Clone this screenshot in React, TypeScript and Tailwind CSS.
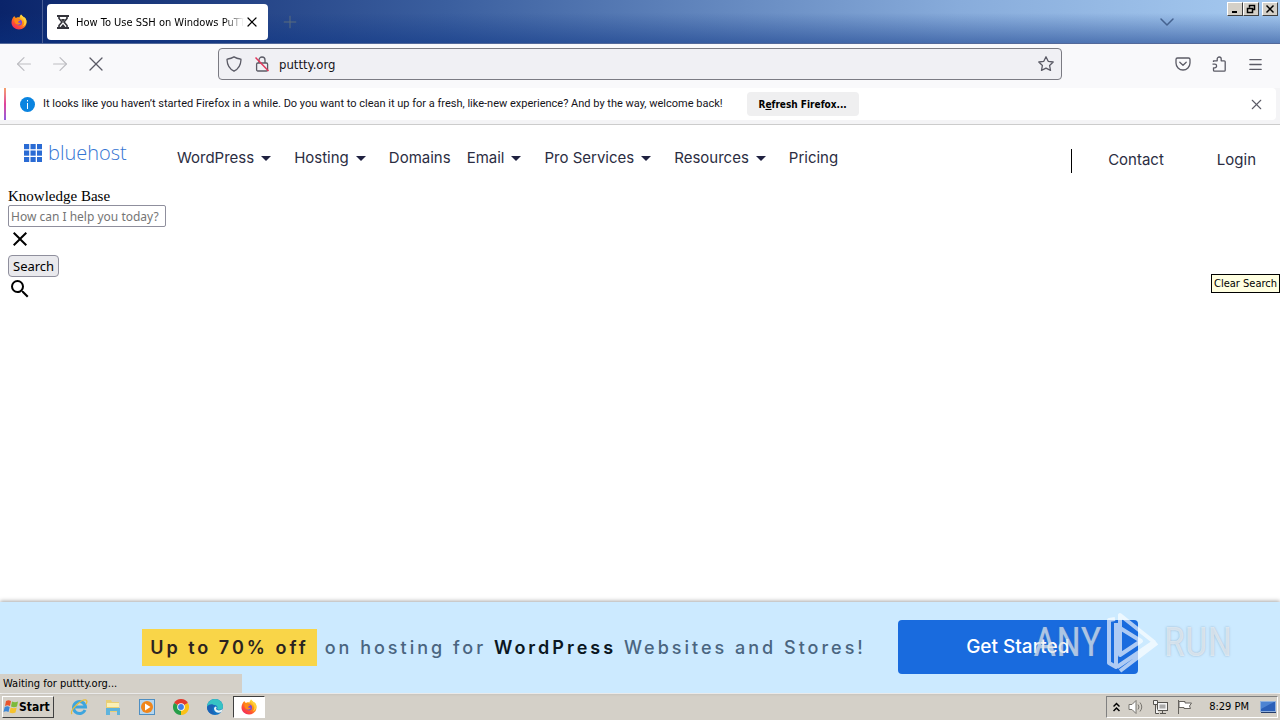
import React from 'react';
import { ArrowLeft, ArrowRight, X, Plus, ChevronDown, Menu } from 'lucide-react';
import { MdClose, MdSearch } from 'react-icons/md';

interface NavItem {
  label: string;
  hasMenu: boolean;
}

const NAV_ITEMS: NavItem[] = [
  { label: 'WordPress', hasMenu: true },
  { label: 'Hosting', hasMenu: true },
  { label: 'Domains', hasMenu: false },
  { label: 'Email', hasMenu: true },
  { label: 'Pro Services', hasMenu: true },
  { label: 'Resources', hasMenu: true },
  { label: 'Pricing', hasMenu: false },
];

const FirefoxLogo = ({ size = 16 }: { size?: number }) => (
  <svg width={size} height={size} viewBox="0 0 32 32" aria-hidden="true">
    <defs>
      <linearGradient id="ffBody" x1="0.85" y1="0.1" x2="0.2" y2="0.95">
        <stop offset="0" stopColor="#fff44f" />
        <stop offset="0.35" stopColor="#ff980e" />
        <stop offset="0.75" stopColor="#ff4a37" />
        <stop offset="1" stopColor="#ee2b62" />
      </linearGradient>
    </defs>
    <path d="M20 1c-2 2-3 4-3 6-3-1-6 0-7 1C8 7 7 5 7 4 3 7 1 12 1 17c0 8 7 14 15 14s15-6 15-14c0-5-2-9-5-11 0 1 1 2 1 3-2-4-5-5-7-8z" fill="url(#ffBody)" />
    <path d="M20 1c-1 4 2 6 4 9 4 5 3 12-1 15 6-2 8-7 8-10 0-4-2-7-5-9l1 3c-2-4-5-5-7-8z" fill="#ffcf3c" />
    <circle cx="16" cy="17" r="6" fill="#7542e5" />
    <path d="M7 9c3-1 6 0 8 2l4 1c-1 2-4 2-5 4 1 2 4 2 6 1-1 4-6 6-10 3-3-3-4-7-3-11z" fill="#ff8a16" />
  </svg>
);

const HourglassIcon = () => (
  <svg width="14" height="16" viewBox="0 0 14 16" fill="none" stroke="#33333a" strokeWidth="2" className="shrink-0" aria-hidden="true">
    <path d="M1 2h12M1 14h12" />
    <path d="M3 2v2.500L6 8l-3 3.500V14M11 2v2.500L8 8l3 3.500V14" strokeWidth="1.600" />
    <path d="M5 5h4L7 8zM7 10l2.500 3h-5z" fill="#33333a" stroke="none" />
  </svg>
);

const ShieldIcon = () => (
  <svg width="16" height="16" viewBox="0 0 16 16" fill="none" stroke="#5b5b66" strokeWidth="1.3" aria-hidden="true">
    <path d="M8 .9c2 1.3 4 1.9 6.3 2.1.5 0 .7.4.7.8C14.800 8.500 13 12.800 8 15.200 3 12.800 1.200 8.500 1 3.800c0-.4.2-.8.7-.8C4 2.800 6 2.200 8 .9z" />
  </svg>
);

const InsecureLockIcon = () => (
  <svg width="16" height="16" viewBox="0 0 16 16" fill="none" stroke="#5b5b66" strokeWidth="1.3" aria-hidden="true">
    <path d="M5 7V4a3 3 0 0 1 6 0v3" />
    <rect x="2.600" y="7" width="11" height="8" rx="1.200" />
    <path d="M1.500 1.500l13 13.500" stroke="#e2375c" strokeWidth="1.500" />
  </svg>
);

const StarIcon = () => (
  <svg width="16" height="16" viewBox="0 0 16 16" fill="none" stroke="#5b5b66" strokeWidth="1.3" strokeLinejoin="round" aria-hidden="true">
    <path d="M8 .8l2.200 4.500 5 .7-3.600 3.500.9 4.900L8 12.100l-4.500 2.300.9-4.900L.8 6l5-.7z" />
  </svg>
);

const PocketIcon = () => (
  <svg width="16" height="16" viewBox="0 0 16 16" fill="none" stroke="#5b5b66" strokeWidth="1.3" strokeLinecap="round" strokeLinejoin="round" aria-hidden="true">
    <path d="M2.500 2h11A1.500 1.500 0 0 1 15 3.500V7A7 7 0 0 1 1 7V3.500A1.500 1.500 0 0 1 2.500 2z" />
    <path d="M4.800 6.200L8 9.200l3.200-3" />
  </svg>
);

const PuzzleIcon = () => (
  <svg width="16" height="16" viewBox="0 0 16 16" fill="none" stroke="#5b5b66" strokeWidth="1.3" strokeLinejoin="round" aria-hidden="true">
    <path d="M2.500 6V4.800h3.700V3a2 2 0 0 1 4 0v1.800h3a1 1 0 0 1 1 1v8.400a1 1 0 0 1-1 1H3.500a1 1 0 0 1-1-1v-2.400h1.300a1.700 1.700 0 0 0 0-3.600H1.500" />
  </svg>
);

const WindowButton = ({ label, children }: { label: string; children: React.ReactNode }) => (
  <button
    aria-label={label}
    className="flex h-[14px] w-4 items-center justify-center border border-t-white border-l-white border-r-[#404040] border-b-[#404040] bg-[#d4d0c8]"
  >
    <svg width="10" height="10" viewBox="0 0 10 10" fill="none" stroke="#000" strokeWidth="1.5" aria-hidden="true">
      {children}
    </svg>
  </button>
);

const TitleBar = () => (
  <header className="flex h-11 items-stretch bg-[linear-gradient(to_bottom,transparent_30%,rgba(10,50,130,0.5)),linear-gradient(to_right,#0a246a,#3b5f9f_35%,#88acdb_75%,#a6caf0)] border-b border-[#53699a]">
    <div className="flex w-[43px] items-center justify-center border-r border-[#4a5f96] pr-1">
      <FirefoxLogo />
    </div>
    <div className="mt-1 mb-[3px] ml-1 flex w-[221px] items-center rounded-[4px] bg-white pl-[9px] pr-2">
      <HourglassIcon />
      <span className="ml-[6px] min-w-0 flex-1 overflow-hidden whitespace-nowrap pt-[3px] text-[11px] [mask-image:linear-gradient(to_right,black_88%,transparent)]">
        How To Use SSH on Windows PuTTY
      </span>
      <button aria-label="Close tab">
        <X size={16} strokeWidth={1.8} />
      </button>
    </div>
    <button aria-label="New tab" className="ml-3 text-[#5a6c7c]">
      <Plus size={20} strokeWidth={1.2} />
    </button>
    <button aria-label="List all tabs" className="ml-auto mr-12 text-[#45628f]">
      <ChevronDown size={24} strokeWidth={1.5} />
    </button>
    <div className="mr-[2px] mt-[2px] flex items-start">
      <WindowButton label="Minimize">
        <path d="M2 8h5" strokeWidth="2" />
      </WindowButton>
      <WindowButton label="Restore">
        <path d="M3.500 3.500V1.500h5v4h-2M1.500 4.500h5v4h-5zM1 4.500h6M3 1.500h6" />
      </WindowButton>
      <div className="ml-[3px] flex">
        <WindowButton label="Close">
          <path d="M1.500 1.500l7 7M8.500 1.500l-7 7" />
        </WindowButton>
      </div>
    </div>
  </header>
);

const Toolbar = () => (
  <div className="flex h-11 items-center bg-[#f9f9fb] pb-1 text-[#5b5b66]">
    <div className="flex w-[218px] items-center pl-[6px]">
      <button aria-label="Back" className="flex w-9 justify-center text-[#bdbdc2]"><ArrowLeft size={22} strokeWidth={1.3} /></button>
      <button aria-label="Forward" className="flex w-9 justify-center text-[#bdbdc2]"><ArrowRight size={22} strokeWidth={1.3} /></button>
      <button aria-label="Stop" className="flex w-9 justify-center"><X size={24} strokeWidth={1.3} /></button>
    </div>
    <div className="flex h-8 flex-1 items-center rounded-[4px] border border-[#7b7b83] bg-[#f0f0f4] px-[7px]">
      <ShieldIcon />
      <span className="ml-3 flex"><InsecureLockIcon /></span>
      <input
        aria-label="Address"
        defaultValue="puttty.org"
        className="ml-[9px] min-w-0 flex-1 bg-transparent pt-px text-[13px] text-[#15141a] outline-none"
      />
      <button aria-label="Bookmark this page"><StarIcon /></button>
    </div>
    <div className="flex w-[218px] items-center justify-end gap-5 pr-4">
      <button aria-label="Save to Pocket"><PocketIcon /></button>
      <button aria-label="Extensions"><PuzzleIcon /></button>
      <button aria-label="Open menu"><Menu size={17} strokeWidth={1.8} /></button>
    </div>
  </div>
);

const Notification = () => (
  <div className="border-b border-[#cccccc] bg-[#f4f4f6] pb-1 pr-1">
    <div className="flex h-8 items-center rounded-r-[4px] bg-white pr-[11px]">
      <div className="ml-1 h-full w-[2px] bg-gradient-to-b from-[#f5a06a] via-[#e0409a] to-[#9059e0]" />
      <span className="ml-[14px] flex size-[15px] items-center justify-center rounded-full bg-[#0a84e0]">
        <svg width="7" height="9" viewBox="0 0 7 9" fill="#fff" aria-hidden="true">
          <path d="M3 0h1v1.500H3zM3 3h1v6H3z" />
        </svg>
      </span>
      <p className="ml-2 whitespace-nowrap font-[Roboto,sans-serif] text-[11px] text-[#15141a]">
        It looks like you haven’t started Firefox in a while. Do you want to clean it up for a fresh, like-new experience? And by the way, welcome back!
      </p>
      <button className="ml-6 h-6 w-28 rounded-[4px] bg-[#efeff0] text-[10px] font-bold whitespace-nowrap">
        R<u>e</u>fresh Firefox...
      </button>
      <button aria-label="Dismiss" className="ml-auto text-[#5b5b66]">
        <X size={17} strokeWidth={1.5} />
      </button>
    </div>
  </div>
);

const SiteHeader = () => (
  <header className="flex h-[63px] items-center pl-6 pr-6 font-[Inter,sans-serif] text-[15px] text-[#2b2d42]">
    <a href="#home" className="mb-2 flex w-[153px] items-center gap-[6px] text-[#3575d3]">
      <svg width="18" height="18" viewBox="0 0 18 18" fill="#2a6bd4" aria-hidden="true">
        {[0, 1, 2].map((row) =>
          [0, 1, 2].map((col) => <rect key={`${row}${col}`} x={col * 6.500} y={row * 6.500} width="5.200" height="5.200" />)
        )}
      </svg>
      <span className="font-['Open_Sans',sans-serif] text-[20px] font-light leading-6">bluehost</span>
    </a>
    <nav className="mt-1 flex items-center gap-4">
      {NAV_ITEMS.map((item) => (
        <a key={item.label} href={`#${item.label}`} className="flex items-center whitespace-nowrap">
          {item.label}
          {item.hasMenu && (
            <span className="flex w-6 justify-center">
              <svg width="10" height="5" viewBox="0 0 10 5" fill="#1f2140" aria-hidden="true"><path d="M0 0h10L5 5z" /></svg>
            </span>
          )}
        </a>
      ))}
    </nav>
    <div className="ml-auto mt-2 flex h-6 items-center border-l border-black pl-9">
      <a href="#contact">Contact</a>
      <a href="#login" className="ml-[53px]">Login</a>
    </div>
  </header>
);

const Banner = () => (
  <section className="flex h-[91px] items-center justify-center gap-8 bg-[#cceaff] pb-px font-[Inter,sans-serif] shadow-[0_-1px_4px_rgba(0,0,0,0.35)]">
    <p className="flex items-center gap-2 whitespace-nowrap text-[18px] font-medium tracking-[3px] text-[#4a6580]">
      <strong className="bg-[#f9d548] px-2 py-[6px] leading-[25px] font-semibold text-[#2b2320]">Up to 70% off</strong>
      <span>
        on hosting for <strong className="font-semibold text-[#0b1722]">WordPress</strong> Websites and Stores!
      </span>
    </p>
    <button className="h-[54px] w-60 rounded-[4px] bg-[#196bde] text-[19px] font-medium text-white">Get Started</button>
  </section>
);

const Watermark = () => (
  <div className="pointer-events-none absolute bottom-[18px] right-12 flex items-center gap-1 font-['Roboto_Condensed','Liberation_Sans_Narrow',Roboto,sans-serif] text-[40px] font-normal leading-none text-white/60 [text-shadow:0_0_2px_rgba(90,120,150,0.5)]">
    <span>ANY</span>
    <svg width="54" height="64" viewBox="5 0 54 64" fill="none" stroke="#fff" strokeOpacity="0.65" strokeWidth="4" strokeLinejoin="round" aria-hidden="true">
      <path d="M14 8L8 9v43l7 4V12M16 56l37-25L19 4v40l21-14-21-13M19 60l37-28" />
    </svg>
    <span>RUN</span>
  </div>
);

const KnowledgeBase = () => (
  <main className="flex flex-1 flex-col items-start px-2 font-['Liberation_Serif',serif] text-[15px] leading-[17px]">
    <label htmlFor="kb-search">Knowledge Base</label>
    <input
      id="kb-search"
      type="text"
      placeholder="How can I help you today?"
      className="h-[22px] w-[158px] rounded-[2px] border border-[#8f8f9d] px-[2px] font-['Noto_Sans',sans-serif] text-[12px] placeholder:text-[#757575]"
    />
    <button aria-label="Clear search" className="mb-1"><MdClose size={24} /></button>
    <button className="h-[22px] rounded-[4px] border border-[#8f8f9d] bg-[#e9e9ed] px-1 font-['Noto_Sans',sans-serif] text-[13px]">
      Search
    </button>
    <MdSearch size={24} />
  </main>
);

const WindowsFlag = () => (
  <svg width="16" height="16" viewBox="0 0 16 16" aria-hidden="true">
    <path d="M3 2c2-1 3-1 5 0L7 7C5 6 4 6 2 7z" fill="#e8542c" />
    <path d="M9 2.500c2 1 4 1 6 0L14 7.500c-2 1-4 1-6 0z" fill="#7dba3c" />
    <path d="M1.700 8c2-1 3-1 5 0l-1.200 5c-2-1-3-1-5 0z" fill="#3c87d6" />
    <path d="M7.700 8.500c2 1 4 1 6 0l-1.200 5c-2 1-4 1-6 0z" fill="#f5c22e" />
  </svg>
);

const InternetExplorerIcon = () => (
  <svg width="18" height="18" viewBox="0 0 18 18" fill="none" aria-hidden="true">
    <path d="M15 12a6 6 0 1 1 .5-3H5" stroke="#3ea5de" strokeWidth="3" />
    <path d="M2 16c-3-3 9-15 14-14 2 1 0 4 0 4" stroke="#e6bd3c" strokeWidth="1.300" />
  </svg>
);

const ExplorerIcon = () => (
  <svg width="18" height="18" viewBox="0 0 18 18" aria-hidden="true">
    <path d="M2 2h5l1 2h7v10H2z" fill="#e9cf75" />
    <path d="M3 5h12v4H3z" fill="#fbf0b5" />
    <path d="M2 10h14v7h-3v-4H6v4H2z" fill="#5fb4dd" />
  </svg>
);

const MediaPlayerIcon = () => (
  <svg width="18" height="18" viewBox="0 0 18 18" aria-hidden="true">
    <rect x="1.500" y="1.500" width="15" height="15" fill="#b5d6ef" stroke="#4f8fc2" />
    <circle cx="9" cy="9" r="6" fill="#f0861b" />
    <path d="M7 5.500l5.500 3.500L7 12.500z" fill="#fff" />
  </svg>
);

const ChromeIcon = () => (
  <svg width="16" height="16" viewBox="0 0 16 16" aria-hidden="true">
    <path d="M8 8L1.070 4A8 8 0 0 1 14.930 4z" fill="#e33b2e" />
    <path d="M8 8L14.930 4A8 8 0 0 1 8 16z" fill="#fbc116" />
    <path d="M8 8v8A8 8 0 0 1 1.070 4z" fill="#269e49" />
    <circle cx="8" cy="8" r="3.800" fill="#fff" />
    <circle cx="8" cy="8" r="2.900" fill="#3f7fe8" />
  </svg>
);

const EdgeIcon = () => (
  <svg width="16" height="16" viewBox="0 0 16 16" aria-hidden="true">
    <circle cx="8" cy="8" r="8" fill="#1273c4" />
    <path d="M0 8a8 8 0 0 1 16 0c0 3-5 3.500-6 2 1-2 0-4-3-4-4 0-6 1-7 2z" fill="#36c3c4" />
    <path d="M9 10c1 2 5 2 7-.5L14.500 13C11 15 7 13 7 9.500c0-1 1-2 2-2 1 1 .5 1.500 0 2.500z" fill="#e8f4f5" />
    <path d="M0 8c1-3 6-4 8-1-3 0-4 5 0 8-5 1-8-3-8-7z" fill="#1b62b5" />
  </svg>
);

const TASKS = [
  { name: 'Internet Explorer', icon: <InternetExplorerIcon /> },
  { name: 'File Explorer', icon: <ExplorerIcon /> },
  { name: 'Media Player', icon: <MediaPlayerIcon /> },
  { name: 'Chrome', icon: <ChromeIcon /> },
  { name: 'Edge', icon: <EdgeIcon /> },
];

const TrayIcons = () => (
  <div className="flex items-center gap-2">
    <svg width="7" height="10" viewBox="0 0 7 10" fill="none" stroke="#000" strokeWidth="1.500" aria-hidden="true">
      <path d="M.5 4.500l3-3 3 3M.5 9l3-3 3 3" />
    </svg>
    <svg width="16" height="16" viewBox="0 0 16 16" fill="#fff" stroke="#77746e" aria-hidden="true">
      <path d="M1 5.500h3l4-4v13l-4-4H1z" />
      <path d="M10 5.500q2 2.500 0 5M12 3.500q3.500 4.500 0 9" fill="none" />
    </svg>
    <svg width="17" height="16" viewBox="0 0 17 16" fill="#f4f4f4" stroke="#55534f" aria-hidden="true">
      <rect x="5.500" y="3.500" width="10" height="8" />
      <rect x="7.500" y="5.500" width="6" height="4" fill="#aaa" stroke="none" />
      <path d="M8 14.500h6M10.500 12v2M1.500 1.500h4v4h-4zM3.500 6v8.500H7" />
    </svg>
    <svg width="16" height="16" viewBox="0 0 16 16" fill="#fff" stroke="#66635e" aria-hidden="true">
      <path d="M1.500 1v14M2 2.500h6v1.500h6.500l-2 3 1 2.500H7V8.500H2z" />
    </svg>
  </div>
);

const Taskbar = () => (
  <footer className="flex h-[27px] items-center border-t border-white bg-[#d4d0c8] pl-[2px] pr-[2px]">
    <button className="flex h-[22px] w-[52px] items-center border border-t-white border-l-white border-r-[#404040] border-b-[#404040] text-[12px] font-bold">
      <WindowsFlag />
      Start
    </button>
    <div className="ml-4 flex items-center gap-4">
      {TASKS.map((task) => (
        <button key={task.name} aria-label={task.name} className="flex w-[18px] justify-center">{task.icon}</button>
      ))}
    </div>
    <button aria-label="Firefox" className="ml-[9px] flex h-[22px] w-8 items-center justify-center border border-t-[#404040] border-l-[#404040] border-r-white border-b-white bg-white">
      <FirefoxLogo />
    </button>
    <div className="ml-auto flex h-[22px] items-center border border-t-[#808080] border-l-[#808080] border-r-white border-b-white pl-[6px] pr-px">
      <TrayIcons />
      <time className="ml-4 mr-[11px] text-[11px] whitespace-nowrap">8:29 PM</time>
      <svg width="16" height="14" viewBox="0 0 16 14" aria-hidden="true">
        <rect x=".5" y="1.500" width="15" height="10" fill="#2b5fb8" stroke="#8fb0dd" />
        <path d="M1 2h13L1 9z" fill="#4d83d2" />
        <path d="M1 12.500h15" stroke="#233c6b" />
      </svg>
    </div>
  </footer>
);

const App: React.FC = () => {
  return (
    <div className="relative flex min-h-screen flex-col bg-white font-['DejaVu_Sans_Condensed','DejaVu_Sans',sans-serif] text-black">
      <TitleBar />
      <Toolbar />
      <Notification />
      <SiteHeader />
      <KnowledgeBase />
      <div className="relative">
        <Banner />
        <Watermark />
        <div className="absolute bottom-0 left-0 h-[19px] w-[242px] bg-[#d4d0c8] px-[3px] text-[11px] leading-5">
          Waiting for puttty.org...
        </div>
      </div>
      <Taskbar />
      <div role="tooltip" className="absolute right-0 top-[274px] border border-black bg-[#ffffe1] px-[2px] text-[11px] leading-[17px]">
        Clear Search
      </div>
    </div>
  );
};

export default App;
